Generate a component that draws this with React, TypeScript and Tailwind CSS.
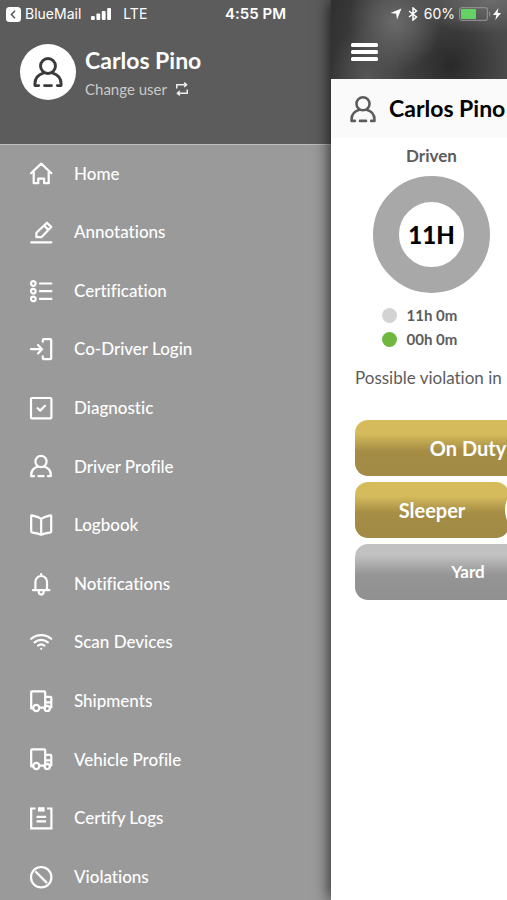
import React from 'react';
import clsx from 'clsx';

interface IconProps {
  className?: string;
  children: React.ReactNode;
}

function Icon({ className = 'size-6', children }: IconProps) {
  return (
    <svg
      viewBox="0 0 24 24"
      className={clsx('shrink-0', className)}
      fill="none"
      stroke="currentColor"
      strokeWidth="2.2"
      strokeLinecap="round"
      strokeLinejoin="round"
      aria-hidden="true"
    >
      {children}
    </svg>
  );
}

function PersonIcon({ className }: { className?: string }) {
  return (
    <Icon className={className}>
      <circle cx="12" cy="7.5" r="5.6" />
      <path d="M5 22.2H2.2v-1.4c0-4 2.6-7 6.6-8.2M19 22.2h2.8v-1.4c0-4-2.6-7-6.6-8.2M9.4 22.2h5.2" />
    </Icon>
  );
}

function TruckIcon() {
  return (
    <Icon>
      <path d="M3.8 19.5H2.2V3.2c0-.6.3-.9.9-.9h12.2c.6 0 .9.3.9.9v15.4h-5.4M16.2 7.8h5.2c.6 0 .9.3.9.9v9.8M17 13.4h5" />
      <circle cx="7.3" cy="19" r="3.1" />
      <circle cx="18.2" cy="19.4" r="2.6" />
    </Icon>
  );
}

const menu = [
  {
    label: 'Home',
    icon: (
      <Icon>
        <path d="M2 12.2 12.2 2.6l10.2 9.6M4.7 11v11.2h4.6v-4.6h5.8v4.6h4.6V11" />
      </Icon>
    ),
  },
  {
    label: 'Annotations',
    icon: (
      <Icon>
        <path d="M7.4 17.2v-4.4L17.9 2.7l4.3 4.2-9.8 10.3zM15.2 5.6l4.1 4.1M2.2 22.3h20.2" />
      </Icon>
    ),
  },
  {
    label: 'Certification',
    icon: (
      <Icon>
        <circle cx="4.3" cy="4.5" r="2.3" />
        <circle cx="4.3" cy="12.2" r="2.3" />
        <circle cx="4.3" cy="19.9" r="2.3" />
        <path d="M11 4.5h11.4M11 12.2h11.4M11 19.9h11.4" />
      </Icon>
    ),
  },
  {
    label: 'Co-Driver Login',
    icon: (
      <Icon>
        <path d="M2 12.2h10.8M9 8l4 4.2-4 4.2M13.8 4.8V3c0-.6.3-.9.9-.9h6.6c.6 0 .9.3.9.9v18.2c0 .6-.3.9-.9.9h-6.6c-.6 0-.9-.3-.9-.9v-1.8" />
      </Icon>
    ),
  },
  {
    label: 'Diagnostic',
    icon: (
      <Icon>
        <rect x="2" y="2" width="20.4" height="20.4" rx="1" />
        <path d="m8.6 12.2 2.6 2.4 4.8-4.8" />
      </Icon>
    ),
  },
  { label: 'Driver Profile', icon: <PersonIcon /> },
  {
    label: 'Logbook',
    icon: (
      <Icon>
        <path d="M12.2 5.8C9.5 4 6 3.2 3 2.4c-.5-.1-.8.1-.8.6v15.6c0 .4.2.7.6.8 3.2.5 6.7.9 9.4 2.4 2.7-1.5 6.2-1.9 9.4-2.4.4-.1.6-.4.6-.8V3c0-.5-.3-.7-.8-.6-3 .8-6.5 1.6-9.2 3.4zM12.2 5.8v16" />
      </Icon>
    ),
  },
  {
    label: 'Notifications',
    icon: (
      <Icon>
        <path d="M12.2 2v1.8M6.4 18V9.8a5.8 5.8 0 0 1 11.6 0V18M4 18.2h16.4M9.6 18.8c0 5 5.2 5 5.2 0" />
      </Icon>
    ),
  },
  {
    label: 'Scan Devices',
    icon: (
      <Icon>
        <path d="M2.2 8.8c5.6-5 14.4-5 20 0M5.600 12.4c3.8-3.5 9.4-3.5 13.2 0M9 15.6c2-1.6 4.4-1.6 6.4 0M12.2 18.8v.01" />
      </Icon>
    ),
  },
  { label: 'Shipments', icon: <TruckIcon /> },
  { label: 'Vehicle Profile', icon: <TruckIcon /> },
  {
    label: 'Certify Logs',
    icon: (
      <Icon>
        <path d="M5.4 2.5H2.2v19.8h20.2V2.5h-3.2M8.6 10.8h7.4M8.6 15.4h7.4" strokeLinecap="square" strokeLinejoin="miter" />
        <path d="M9 1.2h6.600v4.400H9z" fill="currentColor" stroke="none" />
      </Icon>
    ),
  },
  {
    label: 'Violations',
    icon: (
      <Icon>
        <circle cx="12.2" cy="12.2" r="10.2" />
        <path d="m7 7 10.4 10.4" />
      </Icon>
    ),
  },
];

const hours = [
  { text: '11h 0m', dot: 'bg-[#d3d3d3]' },
  { text: '00h 0m', dot: 'bg-[#6fb73f]' },
];

function StatusBar() {
  return (
    <div className="pointer-events-none absolute inset-x-0 top-0 z-30 grid h-7 grid-cols-[1fr_auto_1fr] items-center px-1.5 font-['Inter',sans-serif] text-sm text-white">
      <div className="flex items-center">
        <svg viewBox="0 0 15 15" className="size-[15px]" aria-hidden="true">
          <rect width="15" height="15" rx="3.5" fill="#fff" />
          <path d="M9 3.8 5.4 7.5 9 11.2" fill="none" stroke="#555" strokeWidth="1.5" />
        </svg>
        <span className="ml-1">BlueMail</span>
        <svg viewBox="0 0 20 12" className="ml-2.5 h-3 w-5" fill="currentColor" aria-hidden="true">
          <rect x="0" y="8" width="3.8" height="4" rx="1" />
          <rect x="5.4" y="5.5" width="3.8" height="6.5" rx="1" />
          <rect x="10.8" y="3" width="3.8" height="9" rx="1" />
          <rect x="16.2" y="0" width="3.8" height="12" rx="1" />
        </svg>
        <span className="ml-3">LTE</span>
      </div>
      <span className="pl-1 text-[15px] font-semibold">4:55 PM</span>
      <div className="flex items-center justify-end">
        <svg viewBox="0 0 12 12" className="size-3" fill="currentColor" aria-hidden="true">
          <path d="M11.5.5 7 11.5 6.2 5.8.5 5z" />
        </svg>
        <svg viewBox="0 0 10 14" className="ml-1.5 h-3.5 w-2.5" fill="none" stroke="currentColor" strokeWidth="1.5" aria-hidden="true">
          <path d="M1 4l7.5 6L5 13V1l3.5 3L1 10" />
        </svg>
        <span className="ml-1.5">60%</span>
        <svg viewBox="0 0 32 14" className="ml-1 h-3.5 w-8" aria-hidden="true">
          <rect x=".6" y=".6" width="27.8" height="12.8" rx="2.5" fill="none" stroke="#8d8d8d" strokeWidth="1.2" />
          <rect x="2" y="2" width="15" height="10" rx="1" fill="#65d364" />
          <path d="M30 4.500c1.8.6 1.8 4.4 0 5z" fill="#8d8d8d" />
        </svg>
        <svg viewBox="0 0 8 12" className="ml-0.5 h-3 w-2" fill="currentColor" aria-hidden="true">
          <path d="M5.5 0 0 7h3.4L2.3 12 8 5H4.5z" />
        </svg>
      </div>
    </div>
  );
}

function Drawer() {
  return (
    <aside className="flex w-[331px] shrink-0 flex-col bg-[#9a9a9a] text-white">
      <div className="flex h-[145px] shrink-0 items-start border-b border-[#bdbdbd] bg-[#5c5c5c] pt-11 pl-5">
        <div className="flex size-14 items-center justify-center rounded-full bg-white text-[#3b3b3b]">
          <PersonIcon className="size-8" />
        </div>
        <div className="ml-[9px]">
          <h2 className="text-[23px] leading-8 font-bold">Carlos Pino</h2>
          <button type="button" className="flex items-center gap-2 text-[15px] leading-[26px] text-[#c9c9c9]">
            Change user
            <svg viewBox="0 0 14 14" className="size-3.5" fill="none" stroke="#eee" strokeWidth="1.5" aria-hidden="true">
              <path d="M1.8 6.5V2.8h9.5M9.2.6l2.4 2.2-2.4 2.2M12.2 7.5v3.7H2.7M4.8 9l-2.4 2.2 2.4 2.2" />
            </svg>
          </button>
        </div>
      </div>
      <nav>
        <ul className="grid h-[762px] auto-rows-fr">
          {menu.map((item) => (
            <li key={item.label} className="flex">
              <a href="#" className="flex flex-1 items-center gap-[21px] pb-0.5 pl-[29px] text-[17px] font-medium">
                {item.icon}
                {item.label}
              </a>
            </li>
          ))}
        </ul>
      </nav>
    </aside>
  );
}

function DutyButton({ className, children }: { className: string; children: React.ReactNode }) {
  return (
    <button type="button" className={clsx('h-14 rounded-[13px] font-bold text-white', className)}>
      {children}
    </button>
  );
}

const gold = 'bg-linear-to-b from-[#d6bb5c] from-25% via-[#a58d45] via-55% to-[#a08a45]';
const silver = 'bg-linear-to-b from-[#c1c1c1] from-20% via-[#959595] via-55% to-[#909090]';

function Dashboard() {
  return (
    <main className="relative z-10 w-full shrink-0 bg-white text-[#5c5c5c] shadow-[-2px_0_14px_rgba(0,0,0,0.7)]">
      <header className="h-[79px] bg-[#404040] bg-[radial-gradient(ellipse_46px_50px_at_64px_22px,#6a6a6a,transparent),radial-gradient(ellipse_36px_50px_at_36px_75px,#555555,transparent),radial-gradient(ellipse_80px_34px_at_160px_0px,#6c6c6c,transparent),radial-gradient(ellipse_55px_60px_at_120px_65px,#292929,transparent),linear-gradient(100deg,#303030,#424242_10%,#4a4a4a_35%)] pt-[43px] pl-5">
        <button type="button" aria-label="Menu" className="block text-white">
          <svg viewBox="0 0 28 18" className="h-[18px] w-7" fill="currentColor" aria-hidden="true">
            <rect x="0" y="0" width="27" height="4" rx="1.5" />
            <rect x="0" y="7" width="27" height="4" rx="1.5" />
            <rect x="0" y="14" width="27" height="4" rx="1.5" />
          </svg>
        </button>
      </header>
      <div className="flex h-[59px] items-center gap-3 bg-[#fafafa] pl-[18px]">
        <PersonIcon className="size-7" />
        <h1 className="text-[23px] font-bold text-black">Carlos Pino</h1>
      </div>
      <div className="pt-1.5 pl-6">
        <section className="flex w-[153px] flex-col items-center">
          <h3 className="text-[17px] leading-6 font-bold">Driven</h3>
          <div className="mt-2 flex size-[117px] items-center justify-center rounded-full border-[26px] border-[#a8a8a8] text-2xl font-black text-black">
            11H
          </div>
          <ul className="mt-2.5 pr-6">
            {hours.map((row) => (
              <li key={row.text} className="flex h-6 items-center gap-2.5 text-[15px] font-bold">
                <span className={clsx('size-[15px] rounded-full', row.dot)} />
                {row.text}
              </li>
            ))}
          </ul>
        </section>
        <p className="mt-[15px] text-[17px] leading-6">Possible violation in</p>
        <div className="mt-[30px] flex w-[226px] flex-col gap-1.5">
          <DutyButton className={clsx('text-xl', gold)}>On Duty</DutyButton>
          <div className="flex">
            <DutyButton className={clsx('w-[154px] shrink-0 text-xl', gold)}>Sleeper</DutyButton>
            <span className="-ml-1 h-14 w-14 shrink-0 rounded-full bg-white" />
          </div>
          <DutyButton className={clsx('text-[17px]', silver)}>Yard</DutyButton>
        </div>
      </div>
    </main>
  );
}

export default function App() {
  return (
    <div className="relative flex h-screen overflow-hidden bg-white font-['Lato',sans-serif] [font-variant-ligatures:none]">
      <StatusBar />
      <Drawer />
      <Dashboard />
    </div>
  );
}
